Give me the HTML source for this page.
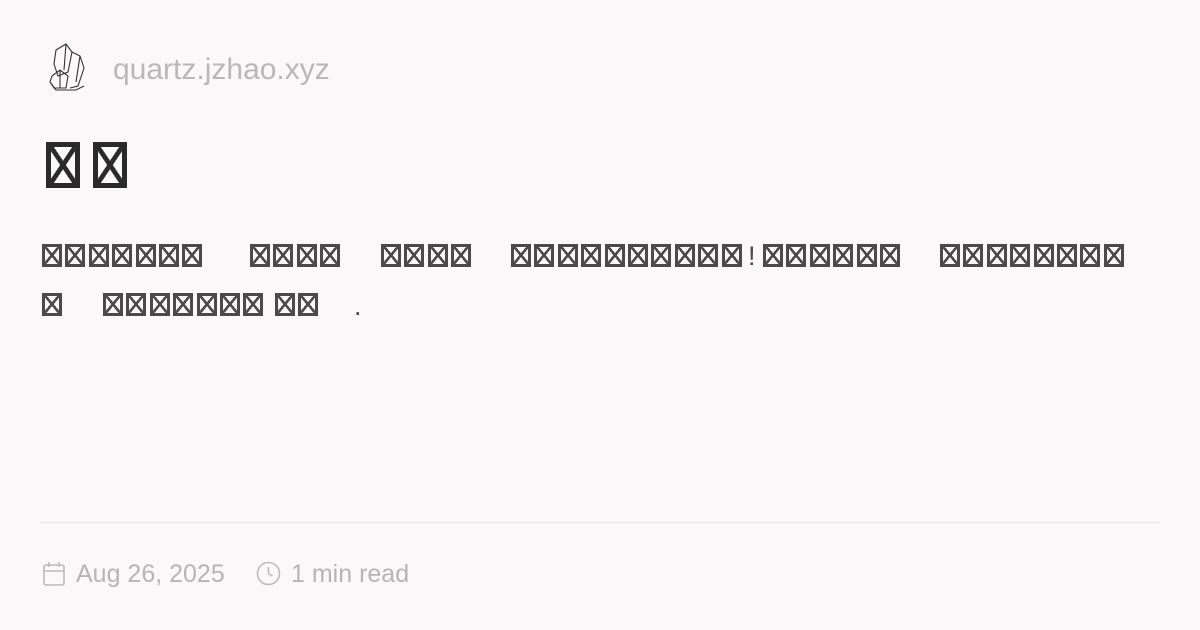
<!DOCTYPE html>
<html><head><meta charset="utf-8"><style>
body{margin:0;width:1200px;height:630px;background:#faf8f8;position:relative;overflow:hidden;font-family:"Liberation Sans",sans-serif}
.g{position:absolute;white-space:nowrap;font-size:0;height:23px}
.b{display:inline-block;vertical-align:top;box-sizing:border-box;width:20px;height:23px;margin-right:3.4px;border:3px solid #4a4a4a;
background:linear-gradient(to top right,transparent 45%,#4a4a4a 45%,#4a4a4a 57%,transparent 57%),linear-gradient(to top left,transparent 45%,#4a4a4a 45%,#4a4a4a 57%,transparent 57%)}
.t{display:inline-block;vertical-align:top;box-sizing:border-box;width:34px;height:46px;margin-right:13px;border:5px solid #2a2a2a;
background:linear-gradient(to top right,transparent 44%,#2a2a2a 44%,#2a2a2a 56%,transparent 56%),linear-gradient(to top left,transparent 44%,#2a2a2a 44%,#2a2a2a 56%,transparent 56%)}
.p{position:absolute;font-size:27px;color:#4a4a4a;line-height:1}
.m{position:absolute;font-size:25px;color:#b5b5b5;font-family:"Liberation Sans",sans-serif;line-height:1}
</style></head><body>
<svg style="position:absolute;left:46px;top:42px" width="42" height="52" viewBox="0 0 42 52" fill="none" stroke="#333" stroke-width="1.1">
<path d="M10 8 L20 2 L26 10 L22 30 L12 34 L8 22 Z M20 2 L18 28 M26 10 L34 14 L38 26 L32 44 L24 46 M34 14 L30 40 M6 34 L14 28 L22 34 L20 46 L8 46 L4 40 Z M14 28 L14 46 M4 40 L10 48 L30 48 L38 44"/>
</svg>
<div class="m" style="left:113px;top:55px;font-size:30px;color:#b8b8b8">quartz.jzhao.xyz</div>
<div class="g" style="left:46px;top:142px;height:46px"><span class="t"></span><span class="t"></span></div>
<div class="g" style="left:42px;top:244px"><span class="b"></span><span class="b"></span><span class="b"></span><span class="b"></span><span class="b"></span><span class="b"></span><span class="b"></span></div>
<div class="g" style="left:250px;top:244px"><span class="b"></span><span class="b"></span><span class="b"></span><span class="b"></span></div>
<div class="g" style="left:381px;top:244px"><span class="b"></span><span class="b"></span><span class="b"></span><span class="b"></span></div>
<div class="g" style="left:511px;top:244px"><span class="b"></span><span class="b"></span><span class="b"></span><span class="b"></span><span class="b"></span><span class="b"></span><span class="b"></span><span class="b"></span><span class="b"></span><span class="b"></span></div>
<div class="p" style="left:748px;top:243px">!</div>
<div class="g" style="left:763px;top:244px"><span class="b"></span><span class="b"></span><span class="b"></span><span class="b"></span><span class="b"></span><span class="b"></span></div>
<div class="g" style="left:940px;top:244px"><span class="b"></span><span class="b"></span><span class="b"></span><span class="b"></span><span class="b"></span><span class="b"></span><span class="b"></span><span class="b"></span></div>
<div class="g" style="left:42px;top:293px"><span class="b"></span></div>
<div class="g" style="left:103px;top:293px"><span class="b"></span><span class="b"></span><span class="b"></span><span class="b"></span><span class="b"></span><span class="b"></span><span class="b"></span></div>
<div class="g" style="left:275px;top:293px"><span class="b"></span><span class="b"></span></div>
<div class="p" style="left:354px;top:293px">.</div>
<div style="position:absolute;left:40px;top:522px;width:1120px;height:1px;background:#e6e4e4"></div>
<svg style="position:absolute;left:42px;top:561px" width="24" height="26" viewBox="0 0 24 26" fill="none" stroke="#bbb" stroke-width="1.6"><rect x="2" y="4" width="20" height="20" rx="2"/><path d="M2 10H22M7 1V6M17 1V6"/></svg>
<div class="m" style="left:76px;top:562px">Aug 26, 2025</div>
<svg style="position:absolute;left:256px;top:561px" width="25" height="25" viewBox="0 0 25 25" fill="none" stroke="#bbb" stroke-width="1.6"><circle cx="12.5" cy="12.5" r="11"/><path d="M12.5 6V12.5L16.5 15"/></svg>
<div class="m" style="left:291px;top:562px">1 min read</div>
</body></html>
